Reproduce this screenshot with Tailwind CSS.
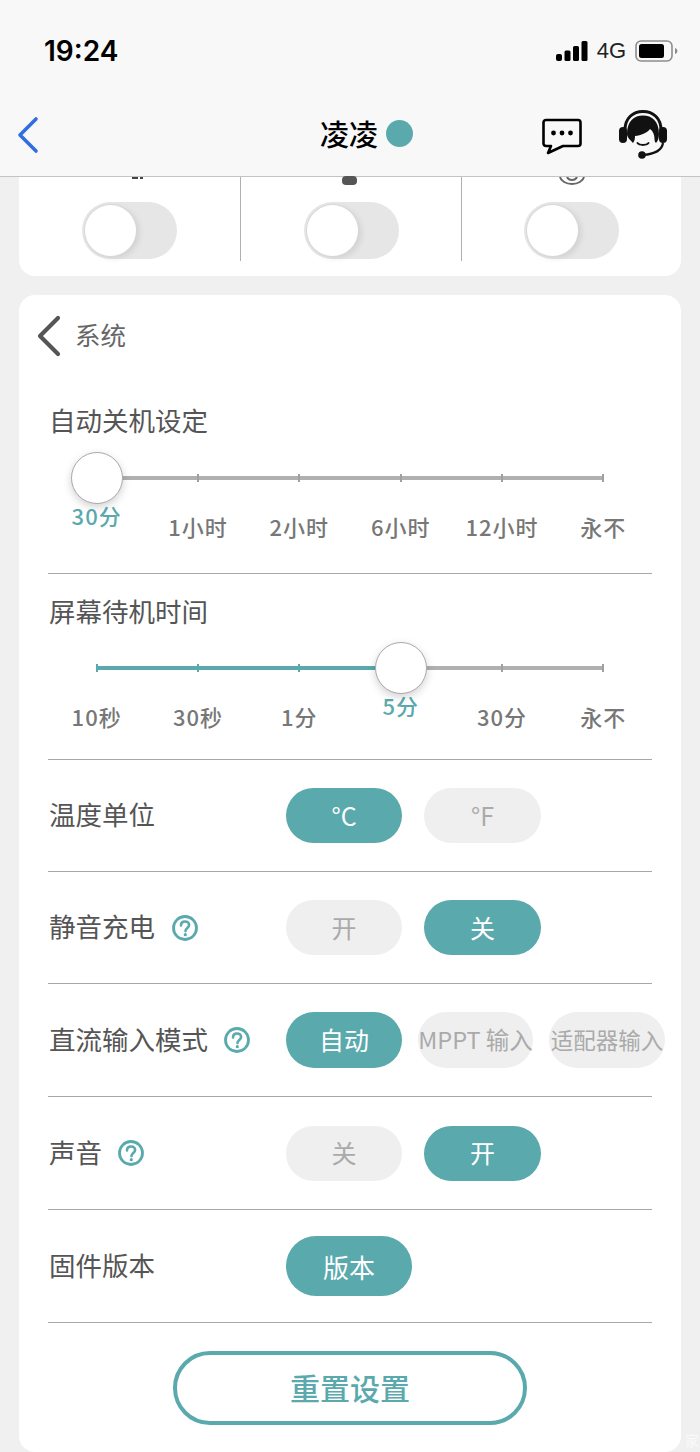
<!DOCTYPE html>
<html lang="zh">
<head>
    <meta charset="UTF-8">
    <meta name="viewport" content="width=device-width, initial-scale=1.0">
    <title>系统设置</title>
    <script src="https://cdn.jsdelivr.net/npm/@tailwindcss/browser@4"></script>
</head>
<body class="bg-[#f0f0f0] font-['Noto_Sans_CJK_SC','Noto_Sans',sans-serif]">
<div class="relative w-[700px] h-[1452px] overflow-hidden">

    <!-- status bar + nav -->
    <header class="h-[177px] bg-[#f8f8f8] border-b border-[#c4c4c4] flex flex-col">
        <div class="h-[102px] flex items-center justify-between pl-[44px] pr-[22px]">
            <span class="font-['Inter',sans-serif] text-[28px] font-semibold text-black leading-none">19:24</span>
            <div class="flex items-center">
                <svg width="32" height="22" viewBox="0 0 32 22" fill="#000">
                    <rect x="0" y="14" width="6" height="7" rx="2"/>
                    <rect x="8.500" y="10.500" width="6" height="10.500" rx="1.500"/>
                    <rect x="17" y="6" width="6" height="15" rx="1.500"/>
                    <rect x="25.500" y="1" width="6" height="20" rx="1.500"/>
                </svg>
                <span class="ml-[9px] font-['Liberation_Sans',sans-serif] text-[22px] leading-none text-[#222]">4G</span>
                <svg class="ml-[9px]" width="43" height="22" viewBox="0 0 43 22">
                    <rect x="1" y="1" width="36" height="20" rx="5" fill="none" stroke="#8c8c8c" stroke-width="1.600"/>
                    <rect x="4" y="4" width="25" height="14" rx="2.500" fill="#000"/>
                    <path d="M40 8v6c1.600-.5 2.400-1.600 2.400-3s-.8-2.500-2.400-3z" fill="#8c8c8c"/>
                </svg>
            </div>
        </div>
        <div class="relative h-[74px] flex items-center justify-between pl-[17px] pr-[33px]">
            <svg class="-mt-[8px]" width="22" height="38" viewBox="0 0 22 38" fill="none">
                <path d="M19 3 3 19l16 16" stroke="#2f6fe0" stroke-width="3.600" stroke-linecap="round" stroke-linejoin="round"/>
            </svg>
            <div class="absolute left-[320px] top-[11px] flex items-center gap-[8px]">
                <span class="text-[29px] font-medium text-black leading-[40px]">凌凌</span>
                <span class="w-[27px] h-[27px] rounded-full bg-[#5aa9ad]"></span>
            </div>
            <div class="flex items-center gap-[37px] -mt-[10px]">
                <svg class="mt-[5px]" width="40" height="37" viewBox="0 0 40 37" fill="none">
                    <path d="M4 2h32a2.500 2.500 0 0 1 2.500 2.500v21a2.500 2.500 0 0 1-2.500 2.500H21L6 35l3-7H4a2.500 2.500 0 0 1-2.500-2.500v-21A2.500 2.500 0 0 1 4 2z" stroke="#000" stroke-width="2.600" stroke-linejoin="round"/>
                    <circle cx="11.500" cy="15" r="2.400" fill="#000"/>
                    <circle cx="20" cy="15" r="2.400" fill="#000"/>
                    <circle cx="28.500" cy="15" r="2.400" fill="#000"/>
                </svg>
                <svg width="48" height="49" viewBox="0 0 48 49">
                    <path d="M6 20C6 8 14 1.500 24 1.500S42 8 42 20" fill="none" stroke="#111" stroke-width="3"/>
                    <path d="M8 24C8 11 15 5.500 24 5.500S40 11 40 24c0 4-1 7-3 9-1-1-1.500-2-1.500-4 0-4-1.500-8-4.500-10-3 4-9 6.500-15 7 0 3-.5 5-2 7-1.500-2-6-5-6-9z" fill="#111"/>
                    <rect x="0" y="17" width="8" height="16" rx="4" fill="#111"/>
                    <rect x="40" y="17" width="8" height="16" rx="4" fill="#111"/>
                    <path d="M18.500 33c2 2.500 9 2.500 11 0" fill="none" stroke="#111" stroke-width="2" stroke-linecap="round"/>
                    <path d="M44 33c-1 7-8 11-20 12" fill="none" stroke="#111" stroke-width="2.200"/>
                    <circle cx="23" cy="45" r="3.800" fill="#111"/>
                </svg>
            </div>
        </div>
    </header>

    <!-- toggles card, scrolled under the nav -->
    <section class="mx-[19px] h-[99px] bg-white rounded-b-[16px] grid grid-cols-[221px_221px_1fr]">
        <div class="relative h-[84px] flex justify-center pt-[25px]">
            <span class="absolute top-0 left-[113px] w-[6px] h-[2px] bg-[#444]"></span>
            <span class="absolute top-0 left-[121px] w-[3px] h-[2px] bg-[#444]"></span>
            <div class="w-[95px] h-[57px] rounded-full bg-[#e6e6e6] p-[3px]">
                <div class="w-[51px] h-[51px] rounded-full bg-white shadow-[0_0_0_1px_#d8d8d8,3px_2px_6px_rgba(0,0,0,0.1)]"></div>
            </div>
        </div>
        <div class="relative h-[84px] border-l border-[#b0b0b0] flex justify-center pt-[25px]">
            <span class="absolute -top-[1px] left-[101px] w-[15px] h-[9px] rounded-[4px] bg-[#555]"></span>
            <div class="w-[95px] h-[57px] rounded-full bg-[#e6e6e6] p-[3px]">
                <div class="w-[51px] h-[51px] rounded-full bg-white shadow-[0_0_0_1px_#d8d8d8,3px_2px_6px_rgba(0,0,0,0.1)]"></div>
            </div>
        </div>
        <div class="relative h-[84px] border-l border-[#b0b0b0] flex justify-center pt-[25px]">
            <svg class="absolute top-0 left-[95px]" width="30" height="8" viewBox="0 0 30 8" fill="none">
                <path d="M3 0c1 4 6 7 12 7s11-3 12-7" stroke="#666" stroke-width="2"/>
                <path d="M10 0c1 2 3 3 5 3s4-1 5-3" stroke="#666" stroke-width="2"/>
            </svg>
            <div class="w-[95px] h-[57px] rounded-full bg-[#e6e6e6] p-[3px]">
                <div class="w-[51px] h-[51px] rounded-full bg-white shadow-[0_0_0_1px_#d8d8d8,3px_2px_6px_rgba(0,0,0,0.1)]"></div>
            </div>
        </div>
    </section>

    <!-- system card -->
    <section class="mx-[19px] mt-[19px] h-[1157px] bg-white rounded-[16px] px-[29px]">
        <div class="h-[82px] flex items-center -ml-[12px] gap-[14px]">
            <svg width="25" height="42" viewBox="0 0 25 42" fill="none">
                <path d="M22 3 4 21l18 18" stroke="#555" stroke-width="4.200" stroke-linecap="round" stroke-linejoin="round"/>
            </svg>
            <span class="text-[25.500px] leading-none text-[#666] -mt-[4px]">系统</span>
        </div>

        <!-- auto power off -->
        <div class="h-[197px] border-b border-[#a8a8a8]">
            <div class="pt-[24px] text-[26.500px] leading-[38px] text-[#555] pl-[1px]">自动关机设定</div>
            <div class="relative mt-[29px] -mx-[2px] grid grid-cols-6 text-[22px] tracking-[1px] leading-[30px] font-medium text-[#777] text-center">
                <div class="absolute left-[50px] right-[50px] top-[8px] h-[4px] bg-[#b0b0b0]"></div>
                <div class="absolute left-[25px] top-[-16px] w-[52px] h-[52px] rounded-full bg-white border border-[#aaa] shadow-[0_3px_8px_rgba(0,0,0,0.18)]"></div>
                <div class="flex flex-col items-center"><span class="h-[20px]"></span><span class="mt-[12px] text-[#5aa9ad]">30分</span></div>
                <div class="flex flex-col items-center"><span class="relative h-[20px] w-[2px]"><i class="absolute top-[6px] left-0 w-[2px] h-[8px] bg-[#a0a0a0]"></i></span><span class="mt-[23px]">1小时</span></div>
                <div class="flex flex-col items-center"><span class="relative h-[20px] w-[2px]"><i class="absolute top-[6px] left-0 w-[2px] h-[8px] bg-[#a0a0a0]"></i></span><span class="mt-[23px]">2小时</span></div>
                <div class="flex flex-col items-center"><span class="relative h-[20px] w-[2px]"><i class="absolute top-[6px] left-0 w-[2px] h-[8px] bg-[#a0a0a0]"></i></span><span class="mt-[23px]">6小时</span></div>
                <div class="flex flex-col items-center"><span class="relative h-[20px] w-[2px]"><i class="absolute top-[6px] left-0 w-[2px] h-[8px] bg-[#a0a0a0]"></i></span><span class="mt-[23px]">12小时</span></div>
                <div class="flex flex-col items-center"><span class="relative h-[20px] w-[2px]"><i class="absolute top-[6px] left-0 w-[2px] h-[8px] bg-[#a0a0a0]"></i></span><span class="mt-[23px]">永不</span></div>
            </div>
        </div>

        <!-- screen standby -->
        <div class="h-[186px] border-b border-[#a8a8a8]">
            <div class="pt-[18px] pl-[1px] text-[26.500px] leading-[38px] text-[#555]">屏幕待机时间</div>
            <div class="relative mt-[28px] -mx-[2px] grid grid-cols-6 text-[22px] tracking-[1px] leading-[30px] font-medium text-[#777] text-center">
                <div class="absolute left-[50px] right-[50px] top-[8px] h-[4px] bg-[#b0b0b0]"></div>
                <div class="absolute left-[50px] top-[8px] w-[304px] h-[4px] bg-[#5aa9ad]"></div>
                <div class="absolute left-[329px] top-[-16px] w-[52px] h-[52px] rounded-full bg-white border border-[#aaa] shadow-[0_3px_8px_rgba(0,0,0,0.18)] z-10"></div>
                <div class="flex flex-col items-center"><span class="relative h-[20px] w-[2px]"><i class="absolute top-[6px] left-0 w-[2px] h-[8px] bg-[#5aa9ad]"></i></span><span class="mt-[23px]">10秒</span></div>
                <div class="flex flex-col items-center"><span class="relative h-[20px] w-[2px]"><i class="absolute top-[6px] left-0 w-[2px] h-[8px] bg-[#5aa9ad]"></i></span><span class="mt-[23px]">30秒</span></div>
                <div class="flex flex-col items-center"><span class="relative h-[20px] w-[2px]"><i class="absolute top-[6px] left-0 w-[2px] h-[8px] bg-[#5aa9ad]"></i></span><span class="mt-[23px]">1分</span></div>
                <div class="flex flex-col items-center"><span class="h-[20px]"></span><span class="mt-[12px] text-[#5aa9ad]">5分</span></div>
                <div class="flex flex-col items-center"><span class="relative h-[20px] w-[2px]"><i class="absolute top-[6px] left-0 w-[2px] h-[8px] bg-[#a0a0a0]"></i></span><span class="mt-[23px]">30分</span></div>
                <div class="flex flex-col items-center"><span class="relative h-[20px] w-[2px]"><i class="absolute top-[6px] left-0 w-[2px] h-[8px] bg-[#a0a0a0]"></i></span><span class="mt-[23px]">永不</span></div>
            </div>
        </div>

        <!-- temperature -->
        <div class="h-[112px] border-b border-[#a8a8a8] flex items-center">
            <div class="w-[238px] shrink-0 pl-[1px] -mt-[2px] text-[26.500px] leading-none text-[#555]">温度单位</div>
            <div class="flex gap-[22px] text-[25px]">
                <div class="w-[116px] h-[55px] rounded-full bg-[#5aa9ad] text-white flex items-center justify-center">°C</div>
                <div class="w-[117px] h-[55px] rounded-full bg-[#efefef] text-[#aaa] flex items-center justify-center">°F</div>
            </div>
        </div>

        <!-- silent charge -->
        <div class="h-[112px] border-b border-[#a8a8a8] flex items-center">
            <div class="w-[238px] shrink-0 pl-[1px] flex items-center gap-[17px] text-[26.500px] leading-none text-[#555]"><span class="-mt-[2px]">静音充电</span>
                <svg width="26" height="26" viewBox="0 0 26 26" fill="none">
                    <circle cx="13" cy="13" r="11.500" stroke="#5aa9ad" stroke-width="2.800"/>
                    <path d="M9 10.500c0-2.500 1.800-4 4.100-4s4 1.500 4 3.600c0 3-3.600 3-3.600 6" stroke="#5aa9ad" stroke-width="2.600" stroke-linecap="round"/>
                    <circle cx="13.300" cy="19.700" r="1.600" fill="#5aa9ad"/>
                </svg>
            </div>
            <div class="flex gap-[22px] text-[25px]">
                <div class="w-[116px] h-[55px] rounded-full bg-[#efefef] text-[#aaa] flex items-center justify-center">开</div>
                <div class="w-[117px] h-[55px] rounded-full bg-[#5aa9ad] text-white flex items-center justify-center">关</div>
            </div>
        </div>

        <!-- dc input mode -->
        <div class="h-[113px] border-b border-[#a8a8a8] flex items-center">
            <div class="w-[238px] shrink-0 pl-[1px] flex items-center gap-[16px] text-[26.500px] leading-none text-[#555]"><span class="-mt-[2px]">直流输入模式</span>
                <svg width="26" height="26" viewBox="0 0 26 26" fill="none">
                    <circle cx="13" cy="13" r="11.500" stroke="#5aa9ad" stroke-width="2.800"/>
                    <path d="M9 10.500c0-2.500 1.800-4 4.100-4s4 1.500 4 3.600c0 3-3.600 3-3.600 6" stroke="#5aa9ad" stroke-width="2.600" stroke-linecap="round"/>
                    <circle cx="13.300" cy="19.700" r="1.600" fill="#5aa9ad"/>
                </svg>
            </div>
            <div class="flex shrink-0 gap-[16px] text-[25px] whitespace-nowrap">
                <div class="w-[116px] h-[56px] rounded-full bg-[#5aa9ad] text-white flex items-center justify-center">自动</div>
                <div class="w-[115px] h-[56px] rounded-full bg-[#efefef] text-[#aaa] flex items-center justify-center text-[23.500px]">MPPT 输入</div>
                <div class="w-[116px] h-[56px] rounded-full bg-[#efefef] text-[#aaa] flex items-center justify-center text-[22.500px]">适配器输入</div>
            </div>
        </div>

        <!-- sound -->
        <div class="h-[113px] border-b border-[#a8a8a8] flex items-center">
            <div class="w-[238px] shrink-0 pl-[1px] flex items-center gap-[16px] text-[26.500px] leading-none text-[#555]"><span class="-mt-[2px]">声音</span>
                <svg width="26" height="26" viewBox="0 0 26 26" fill="none">
                    <circle cx="13" cy="13" r="11.500" stroke="#5aa9ad" stroke-width="2.800"/>
                    <path d="M9 10.500c0-2.500 1.800-4 4.100-4s4 1.500 4 3.600c0 3-3.600 3-3.600 6" stroke="#5aa9ad" stroke-width="2.600" stroke-linecap="round"/>
                    <circle cx="13.300" cy="19.700" r="1.600" fill="#5aa9ad"/>
                </svg>
            </div>
            <div class="flex gap-[22px] text-[25px]">
                <div class="w-[116px] h-[55px] rounded-full bg-[#efefef] text-[#aaa] flex items-center justify-center">关</div>
                <div class="w-[117px] h-[55px] rounded-full bg-[#5aa9ad] text-white flex items-center justify-center">开</div>
            </div>
        </div>

        <!-- firmware -->
        <div class="h-[113px] border-b border-[#a8a8a8] flex items-center">
            <div class="w-[238px] shrink-0 pl-[1px] -mt-[2px] text-[26.500px] leading-none text-[#555]">固件版本</div>
            <div class="w-[126px] h-[60px] rounded-full bg-[#5aa9ad] text-white text-[26px] flex items-center justify-center">版本</div>
        </div>

        <!-- reset -->
        <div class="flex justify-center pt-[28px]">
            <div class="w-[354px] h-[74px] pb-[2px] rounded-full border-[4px] border-[#5aa9ad] text-[#5aa9ad] text-[30px] font-medium flex items-center justify-center">重置设置</div>
        </div>
    </section>

    <span class="absolute right-[1px] bottom-[4px] text-[14px] leading-[16px] text-white/70">家</span>
</div>
</body>
</html>
